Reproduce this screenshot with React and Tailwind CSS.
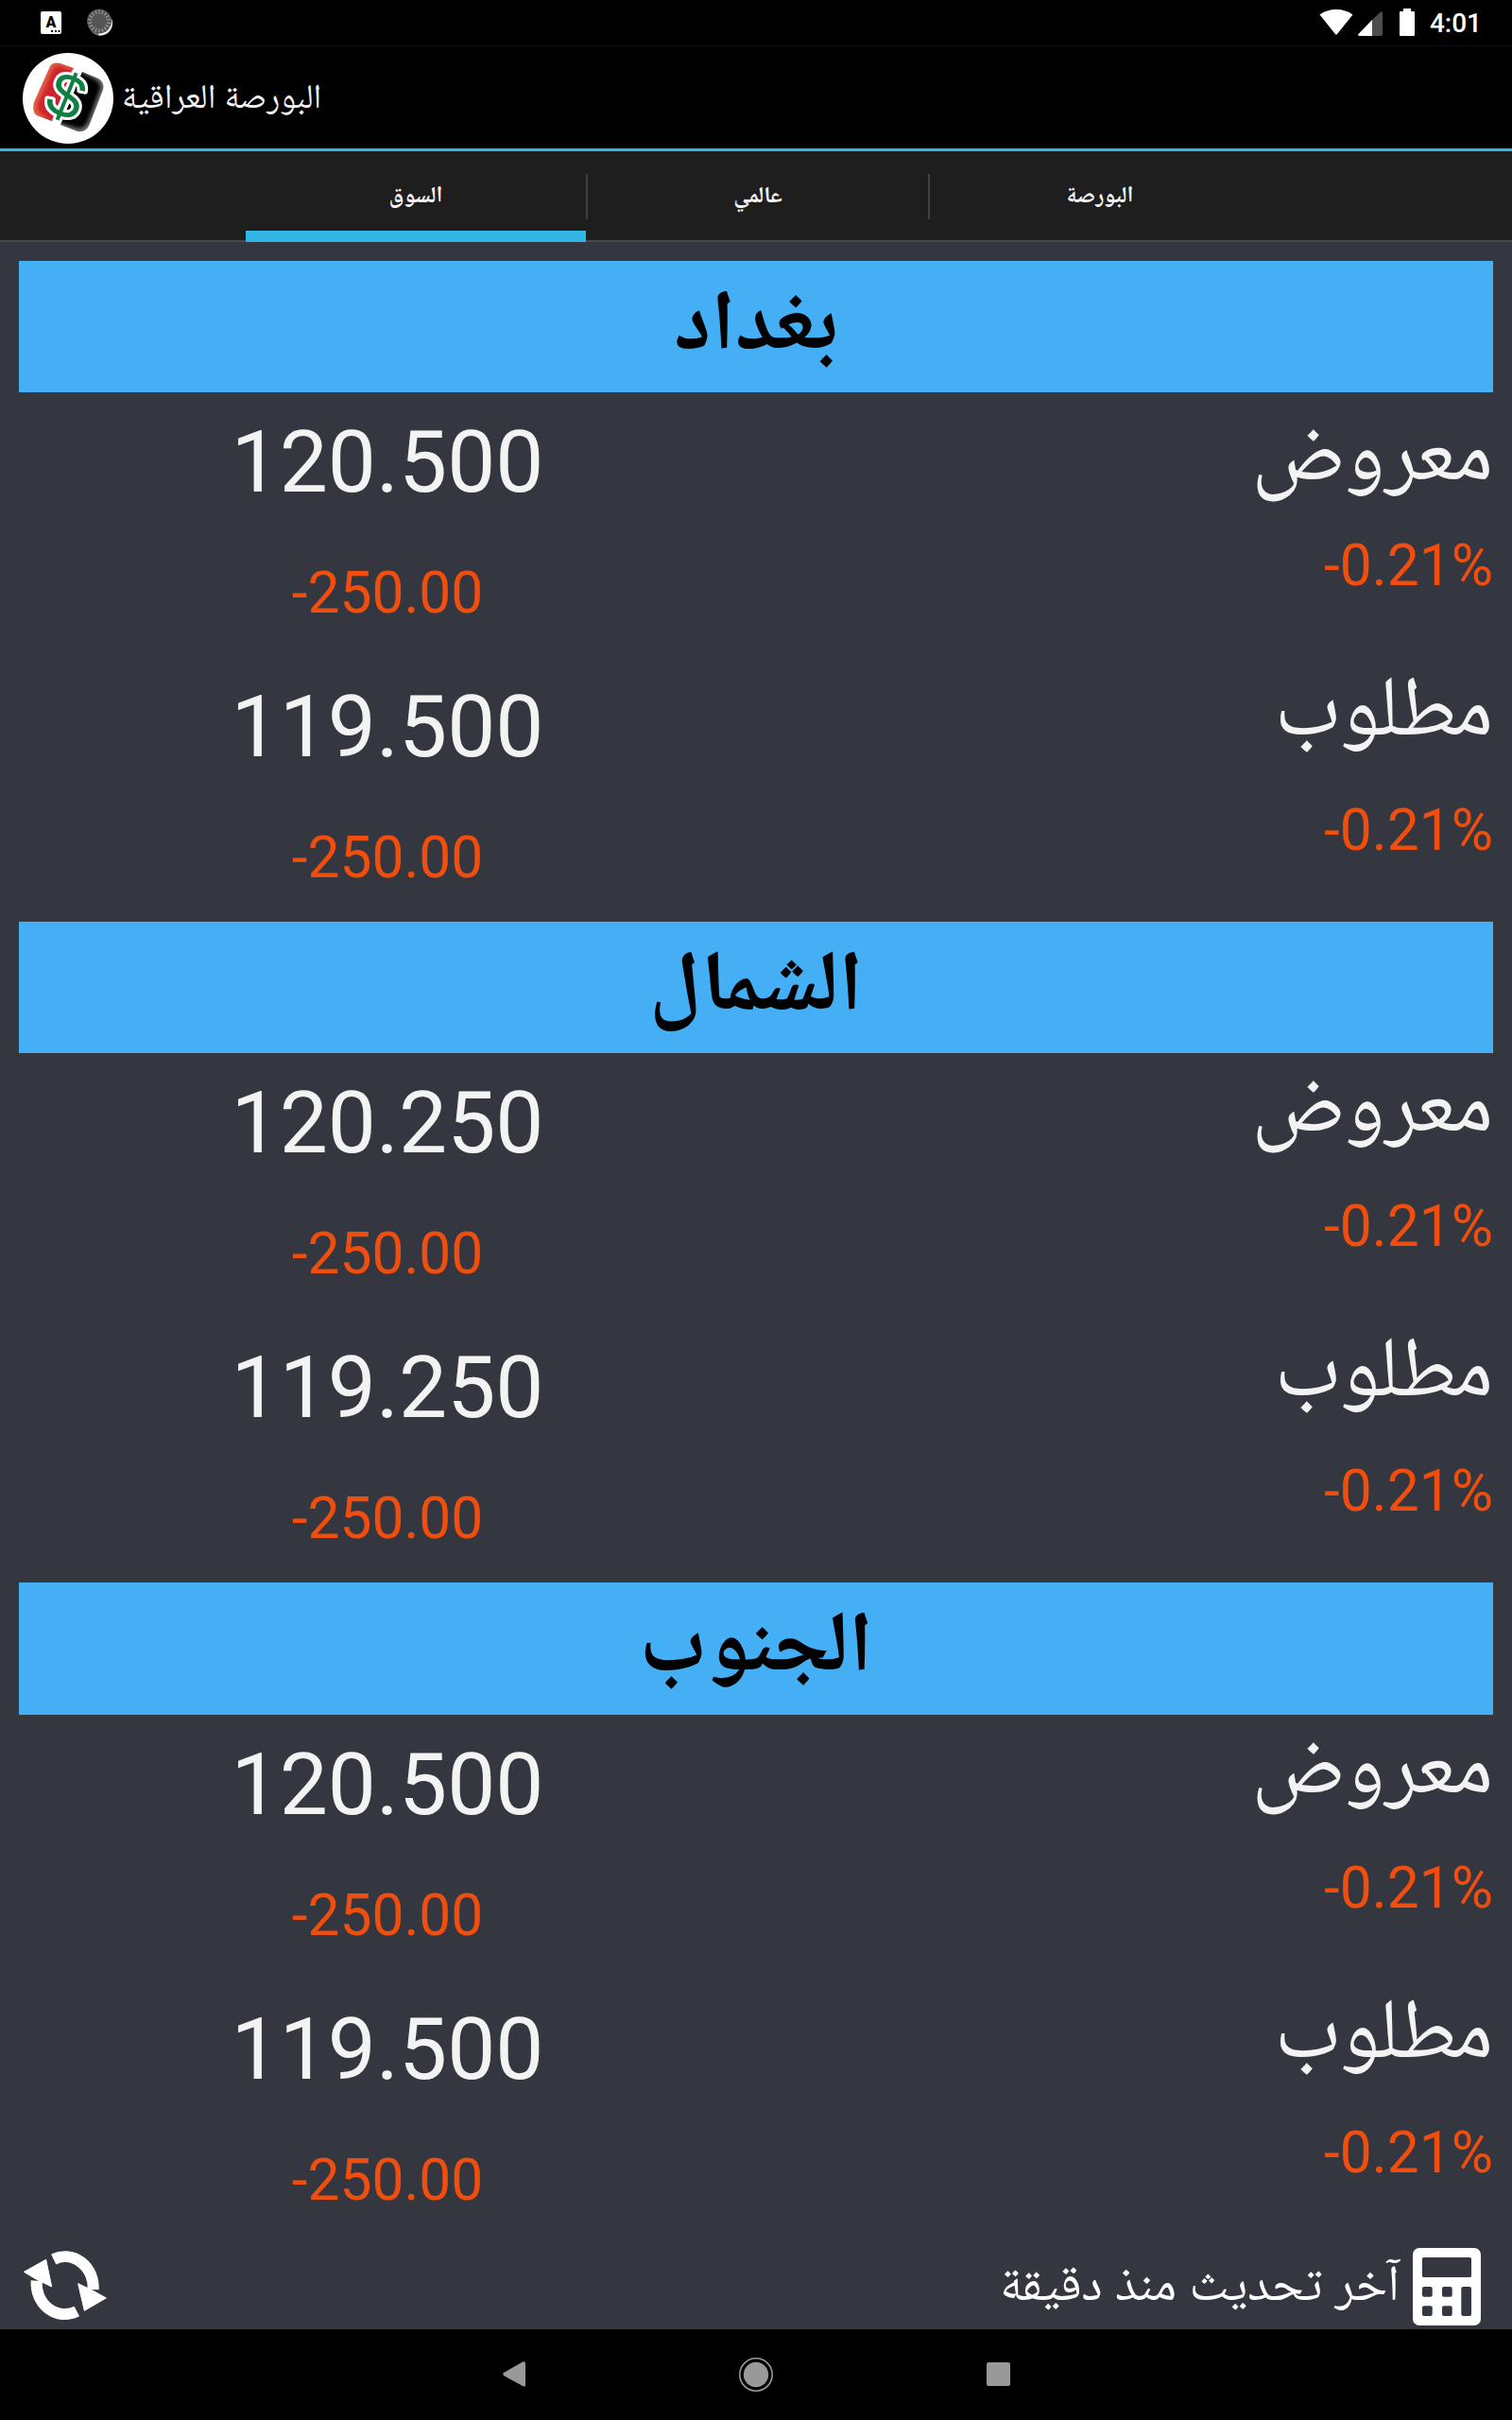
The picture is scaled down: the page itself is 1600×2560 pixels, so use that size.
import React from "react";

const tabs = [
  { name: "السوق", active: true },
  { name: "عالمي", active: false },
  { name: "البورصة", active: false },
];

const cities = [
  {
    name: "بغداد",
    rows: [
      { label: "معروض", price: "120.500", change: "-250.00", percent: "-0.21%", first: true },
      { label: "مطلوب", price: "119.500", change: "-250.00", percent: "-0.21%" },
    ],
  },
  {
    name: "الشمال",
    rows: [
      { label: "معروض", price: "120.250", change: "-250.00", percent: "-0.21%" },
      { label: "مطلوب", price: "119.250", change: "-250.00", percent: "-0.21%" },
    ],
  },
  {
    name: "الجنوب",
    rows: [
      { label: "معروض", price: "120.500", change: "-250.00", percent: "-0.21%" },
      { label: "مطلوب", price: "119.500", change: "-250.00", percent: "-0.21%" },
    ],
  },
];

const ticks = [0, 20, 40, 60, 80, 100, 120, 140, 160, 180, 200, 220, 240, 260, 280, 300, 320, 340];

const StatusBar = () => {
  return (
    <div className="flex h-[49px] items-start border-b border-[#111111] bg-black">
      <svg className="mt-3 ml-[43px] h-6 w-[22px]" viewBox="0 0 22 24">
        <rect width="22" height="24" rx="2" fill="#fff" />
        <text x="11" y="17" textAnchor="middle" fontFamily="Roboto" fontWeight="900" fontSize="16" fill="#000">A</text>
        <path d="M11 20h2v2h-2zM15 20h2v2h-2zM18.500 20h2v2h-2z" fill="#000" />
      </svg>
      <svg className="mt-[9px] ml-[26px] h-[30px] w-[30px]" viewBox="0 0 30 30">
        <circle cx="15.500" cy="16" r="12.800" fill="#777" />
        <path d="M27.300 12A13 13 0 0 1 13 28.300L14 26A12 12 0 0 0 26 12z" fill="#fff" />
        <circle cx="14" cy="13.500" r="13" fill="#555" />
        {ticks.map((angle) => (
          <path key={angle} d="M14 1.500v4" stroke="#a5a5a5" strokeWidth="1" transform={`rotate(${angle} 14 13.5)`} />
        ))}
      </svg>
      <div className="ml-auto flex pr-8">
        <svg className="mt-[9px] h-[30px] w-[36px]" viewBox="0 0 36 30">
          <path d="M.500 6.500Q8 1 18 1t17.500 5.500L19 27q-1 1.500-2 0z" fill="#fff" />
        </svg>
        <svg className="mt-3 ml-[5px] h-[26px] w-[26px]" viewBox="0 0 26 26">
          <path d="M24 .500q2-1 2 1V24q0 2-2 2H15V9z" fill="#4d4d4d" />
          <path d="M15 9v17H1q-1.500-.500-.500-2z" fill="#fff" />
        </svg>
        <svg className="mt-[9px] ml-[18px] h-[29px] w-4" viewBox="0 0 16 29">
          <path d="M4 0h8v3h3q1 0 1 1v24q0 1-1 1H1q-1 0-1-1V4q0-1 1-1h3z" fill="#fff" />
        </svg>
        <span className="ml-4 font-[Roboto] text-[28px] leading-[50px] font-medium text-white">4:01</span>
      </div>
    </div>
  );
};

const Logo = () => {
  return (
    <svg className="h-24 w-24" viewBox="0 0 96 96">
      <defs>
        <filter id="soft" x="-10%" y="-10%" width="120%" height="120%">
          <feGaussianBlur stdDeviation="2" />
        </filter>
        <clipPath id="redShape">
          <path d="M29 14Q32 9 40 11L54 16L31 72L17 67Q9 64 12 52Z" />
        </clipPath>
        <clipPath id="blackShape">
          <path d="M63 20L80 27Q87 31 85 39L71 75Q67 85 58 83L40 76Z" />
        </clipPath>
      </defs>
      <circle cx="48" cy="48" r="48" fill="#fff" />
      <g clipPath="url(#redShape)">
        <rect width="96" height="96" fill="#e0654a" />
        <path d="M32 17Q34 13 40 14L60 20L36 80L20 65Q13 62 16 53Z" fill="#cf202a" filter="url(#soft)" />
      </g>
      <g clipPath="url(#blackShape)">
        <rect width="96" height="96" fill="#777" />
        <path d="M56 17L77 28Q84 32 82 39L69 73Q65 81 58 80L36 73Z" fill="#000" filter="url(#soft)" />
      </g>
      <text
        x="46"
        y="68"
        textAnchor="middle"
        fontFamily="Liberation Sans"
        fontSize="66"
        fill="#0f7f42"
        stroke="#fff"
        strokeWidth="6"
        strokeLinejoin="round"
        paintOrder="stroke"
        transform="rotate(22 46 47)"
      >
        $
      </text>
    </svg>
  );
};

const Header = () => {
  return (
    <header className="flex h-[111px] items-start border-b-[3px] border-[#33b5e5] bg-black pt-[7px] pl-6">
      <Logo />
      <h1 dir="rtl" className="ml-[9px] text-[36.3px] leading-[91px] text-[#f3f3f3]">البورصة العراقية</h1>
    </header>
  );
};

const Tabs = () => {
  return (
    <nav className="flex h-24 bg-[#1e1e1e]">
      <div className="w-[260px] border-b-2 border-[#4a4a4a]" />
      {tabs.map((tab, i) => (
        <div key={tab.name} className={tab.active ? "w-[360px] border-b-[12px] border-[#33b5e5]" : "w-[362px] border-b-2 border-[#4a4a4a]"}>
          <div className="flex items-start">
            {i > 0 && <div className="mt-6 h-12 w-[2px] bg-[#404040]" />}
            <span dir="rtl" className="h-20 flex-1 text-center text-[24.3px] leading-[92px] font-bold text-[#f3f3f3]">{tab.name}</span>
          </div>
        </div>
      ))}
      <div className="flex-1 border-b-2 border-[#4a4a4a]" />
    </nav>
  );
};

const PriceRow = ({ row }) => {
  return (
    <div className="grid h-[280px] grid-cols-2">
      <div className="pt-[21px] text-center">
        <p className="text-[91px] leading-[106px] text-[#f3f3f3]">{row.price}</p>
        <p className="mt-[51px] text-[60.5px] leading-[70px] text-[#f04e0f]">{row.change}</p>
      </div>
      <div className={row.first ? "pt-5 text-right" : "pt-[10px] text-right"}>
        <p dir="rtl" className="text-[90px] leading-[106px] font-[Noto_Naskh_Arabic,DejaVu_Sans,sans-serif] text-[#f3f3f3]">{row.label}</p>
        <p className={row.first ? "mt-[23px] text-[60.5px] leading-[70px] text-[#f04e0f]" : "mt-[33px] text-[60.5px] leading-[70px] text-[#f04e0f]"}>{row.percent}</p>
      </div>
    </div>
  );
};

const Footer = () => {
  return (
    <footer className="flex h-[90.4px] items-start pt-[4.4px] pr-[33px] pl-[25px]">
      <svg className="h-[79px] w-[88px]" viewBox="77 84 264 237">
        <path d="M172 120A90 98 0 0 1 298 216" fill="none" stroke="#fff" strokeWidth="36" />
        <path d="M246 285A90 98 0 0 1 118 188" fill="none" stroke="#fff" strokeWidth="36" />
        <path d="M78 160L148 121L166 207L118 184z" fill="#fff" stroke="#fff" strokeWidth="3" strokeLinejoin="round" />
        <path d="M339 243L270 283L250 197L298 220z" fill="#fff" stroke="#fff" strokeWidth="3" strokeLinejoin="round" />
      </svg>
      <p dir="rtl" className="ml-auto text-[53.4px] leading-[74px] text-white">آخر تحديث منذ دقيقة</p>
      <svg className="ml-[14px] h-[82px] w-[72px]" viewBox="0 0 72 82">
        <rect width="72" height="82" rx="7" fill="#fff" />
        <g fill="#34373f">
          <rect x="10" y="10" width="52" height="21" rx="1.500" />
          <rect x="10" y="41" width="10.700" height="10.700" rx="2" />
          <rect x="31" y="41" width="10.700" height="10.700" rx="2" />
          <rect x="10" y="61.300" width="10.700" height="10.700" rx="2" />
          <rect x="31" y="61.300" width="10.700" height="10.700" rx="2" />
          <rect x="51.300" y="41" width="10.700" height="31" rx="2" />
        </g>
      </svg>
    </footer>
  );
};

const NavBar = () => {
  return (
    <div className="flex h-24 items-center bg-black pl-[532px]">
      <svg className="h-[27px] w-6" viewBox="0 0 24 27">
        <path d="M1 12L21 .600Q24-.500 24 2V25Q24 27.500 21 26L1 15Q-.500 13.500 1 12z" fill="#999" />
      </svg>
      <svg className="ml-[226px] h-9 w-9" viewBox="0 0 36 36">
        <circle cx="18" cy="18" r="17.200" fill="none" stroke="#999" strokeWidth="1.600" />
        <circle cx="18" cy="18" r="13.200" fill="#999" />
      </svg>
      <div className="ml-[226px] h-[25px] w-[25px] rounded-[2px] bg-[#999999]" />
    </div>
  );
};

export default function App() {
  return (
    <div className="h-[2560px] w-[1600px] overflow-hidden bg-[#34373f] font-[Roboto,Noto_Naskh_Arabic,DejaVu_Sans,sans-serif]">
      <StatusBar />
      <Header />
      <Tabs />
      <main className="px-5 pt-5">
        {cities.map((city) => (
          <section key={city.name} className="h-[699.2px]">
            <h2 dir="rtl" className="h-[139.2px] bg-[#44aff5] text-center font-[Noto_Naskh_Arabic,DejaVu_Sans,sans-serif] text-[90px] leading-[147px] font-bold text-black">{city.name}</h2>
            {city.rows.map((row) => (
              <PriceRow key={row.label} row={row} />
            ))}
          </section>
        ))}
      </main>
      <Footer />
      <NavBar />
    </div>
  );
}
